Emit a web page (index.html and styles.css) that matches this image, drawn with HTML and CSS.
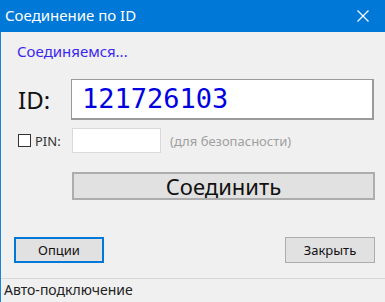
FILE: index.html
```html
<!DOCTYPE html>
<html lang="ru">
<head>
    <meta charset="UTF-8">
    <meta name="viewport" content="width=device-width, initial-scale=1.0">
    <title>Соединение по ID</title>
    <link rel="stylesheet" href="styles.css">
</head>
<body>
    <div class="window">
        <div class="titlebar">
            <span class="title">Соединение по ID</span>
            <svg class="close" width="12" height="12" viewBox="0 0 12 12">
                <path d="M0.5 0.5 L11.5 11.5 M11.5 0.5 L0.5 11.5" stroke="#fff" stroke-width="1.2" fill="none"/>
            </svg>
        </div>
        <div class="content">
            <div class="status-text">Соединяемся...</div>
            <div class="id-row">
                <label class="id-label">ID:</label>
                <div class="id-box">121726103</div>
            </div>
            <div class="pin-row">
                <span class="checkbox"></span>
                <span class="pin-label">PIN:</span>
                <div class="pin-box"></div>
                <span class="hint">(для безопасности)</span>
            </div>
            <div class="connect-row">
                <button class="btn connect">Соединить</button>
            </div>
            <div class="bottom-row">
                <button class="btn small default">Опции</button>
                <button class="btn small">Закрыть</button>
            </div>
        </div>
        <div class="statusbar">Авто-подключение</div>
    </div>
</body>
</html>
```

FILE: styles.css
```css
body {
    margin: 0;
    font-family: "Noto Sans", "Open Sans", sans-serif;
    background-color: #f0f0f0;
}
.window {
    width: 385px;
    height: 302px;
    box-sizing: border-box;
    border-left: 1px solid #1883d7;
    background-color: #f0f0f0;
    display: flex;
    flex-direction: column;
}
.titlebar {
    height: 32px;
    margin-left: -1px;
    background-color: #0078d7;
    display: flex;
    align-items: center;
    justify-content: space-between;
    padding: 0 16px 0 5px;
}
.title {
    color: #fff;
    font-size: 15px;
    margin-top: -2px;
}
.close {
    display: block;
}
.content {
    flex: 1;
    padding: 0 10px 0 12px;
}
.status-text {
    margin-top: 9px;
    margin-left: 4px;
    font-size: 15px;
    color: #3b28f0;
    height: 20px;
    line-height: 20px;
}
.id-row {
    display: flex;
    align-items: center;
    margin-top: 18px;
}
.id-label {
    width: 53px;
    margin-left: 5px;
    font-size: 24px;
    color: #111;
}
.id-box {
    width: 303px;
    height: 41px;
    box-sizing: border-box;
    border: 1px solid #9a9a9a;
    border-right-width: 2px;
    border-bottom-width: 2px;
    background-color: #fff;
    color: #0000e0;
    font-family: "DejaVu Sans Mono", monospace;
    font-size: 27px;
    line-height: 37px;
    padding-left: 10px;
}
.pin-row {
    display: flex;
    align-items: center;
    margin-top: 8px;
    height: 25px;
}
.checkbox {
    width: 13px;
    height: 13px;
    box-sizing: border-box;
    border: 1px solid #333;
    background-color: #fff;
    margin-left: 5px;
}
.pin-label {
    font-size: 13px;
    color: #333;
    margin-left: 4px;
    width: 37px;
}
.pin-box {
    width: 89px;
    height: 25px;
    box-sizing: border-box;
    border: 1px solid #d9d9d9;
    background-color: #fff;
}
.hint {
    font-size: 13px;
    color: #a0a0a0;
    margin-left: 9px;
}
.connect-row {
    margin-top: 19px;
    padding-left: 59px;
}
.btn {
    font-family: "Noto Sans", "Open Sans", sans-serif;
    background-color: #e1e1e1;
    border: 1px solid #adadad;
    color: #111;
    padding: 0;
    box-sizing: border-box;
}
.connect {
    width: 303px;
    height: 28px;
    font-size: 22px;
    line-height: 24px;
    border-width: 2px;
}
.bottom-row {
    display: flex;
    justify-content: space-between;
    margin-top: 37px;
    padding-left: 1px;
}
.small {
    width: 90px;
    height: 26px;
    font-size: 13px;
}
.default {
    border: 2px solid #0078d7;
}
.statusbar {
    height: 23px;
    border-top: 1px solid #d7d7d7;
    font-size: 14px;
    color: #222;
    padding-left: 3px;
    line-height: 22px;
}
```
